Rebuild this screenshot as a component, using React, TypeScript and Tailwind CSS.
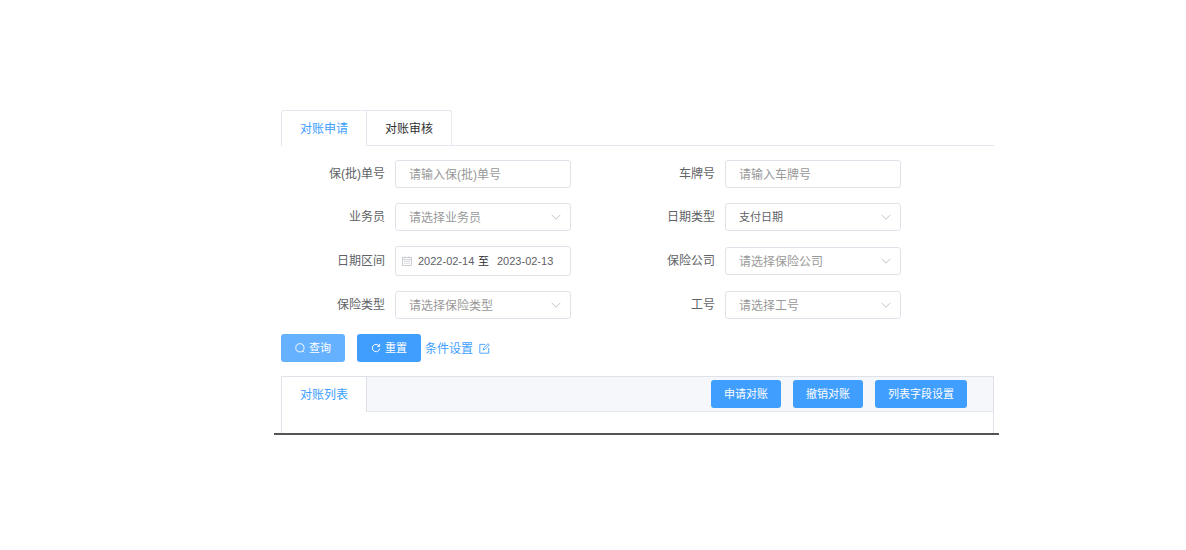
import { useState } from "react";
import type { ReactNode } from "react";

const FIELD = "h-7 w-[176px] rounded-[3px] border border-[#dfe2e8] bg-white px-[13px] outline-none focus:border-[#409eff]";

const ChevronIcon = () => (
  <svg className="pointer-events-none absolute right-[10px] top-[9px]" width="10" height="10" viewBox="0 0 10 10" fill="none">
    <path d="M0.7 2.9L5 7.2L9.3 2.9" stroke="#c0c4cc" strokeWidth="1"/>
  </svg>
);

const CalendarIcon = () => (
  <svg width="10" height="10" viewBox="0 0 10 10" fill="none" stroke="#c0c4cc" strokeWidth="0.8">
    <rect x="0.5" y="1.4" width="9" height="8.1"/>
    <path d="M0.5 3.7H9.5M2.9 0.3V2.3M7.1 0.3V2.3M2.2 5.4H3.6M4.3 5.4H5.7M6.4 5.4H7.8M2.2 7.4H3.6M4.3 7.4H5.7M6.4 7.4H7.8"/>
  </svg>
);

const SearchIcon = () => (
  <svg width="10" height="10" viewBox="0 0 10 10" fill="none" stroke="currentColor" strokeWidth="0.9">
    <circle cx="4.9" cy="4.8" r="4.1"/>
    <path d="M7.7 7.8L9.2 9.4"/>
  </svg>
);

const RefreshIcon = () => (
  <svg width="10" height="10" viewBox="0 0 10 10" fill="none" stroke="currentColor" strokeWidth="1">
    <path d="M8 2.8A3.7 3.7 0 1 0 8.7 5.6"/>
    <path d="M8.6 0.8V3.3H6.1"/>
  </svg>
);

const EditIcon = () => (
  <svg width="11" height="11" viewBox="0 0 11 11" fill="none" stroke="currentColor" strokeWidth="0.9">
    <path d="M6.2 1.4H0.8V10.2H9.7V5"/>
    <path d="M4.2 6.9L4.6 5L9 0.7L10.4 2L6 6.4L4.2 6.9Z"/>
  </svg>
);

function FormItem({ id, label, children }: { id: string; label: string; children: ReactNode }) {
  return (
    <div className="flex items-center gap-[10px]">
      <label htmlFor={id} className="w-[104px] text-right text-[#606266]">{label}</label>
      {children}
    </div>
  );
}

function TextField({ id, label, placeholder }: { id: string; label: string; placeholder: string }) {
  return (
    <FormItem id={id} label={label}>
      <input id={id} type="text" placeholder={placeholder}
        className={`${FIELD} pt-[2px] text-[#606266] placeholder:text-[#999999]`}/>
    </FormItem>
  );
}

function SelectField({ id, label, placeholder, value }: { id: string; label: string; placeholder?: string; value?: string }) {
  return (
    <FormItem id={id} label={label}>
      <div className="relative">
        <select id={id}
          className={`${FIELD} block appearance-none ${value ? "text-[11px] text-[#606266]" : "pt-[2px] text-[#999999]"}`}>
          <option>{value ?? placeholder}</option>
        </select>
        <ChevronIcon />
      </div>
    </FormItem>
  );
}

const TABS = ["对账申请", "对账审核"];
const ACTIONS = ["申请对账", "撤销对账", "列表字段设置"];

export default function App() {
  const [tab, setTab] = useState(0);
  const [start, setStart] = useState("2022-02-14");
  const [end, setEnd] = useState("2023-02-13");

  return (
    <main className="bg-white pb-[115px] pl-[274px] pr-[187px] pt-[110px] font-['Liberation_Sans','Noto_Sans_CJK_SC',sans-serif] text-[12px]">
      <div className="border-b-2 border-[#555555] pl-[7px] pr-[5px]">
        {/* Page tabs */}
        <div className="flex border-b border-[#e4e7ed]">
          <div role="tablist" className="-mb-px flex rounded-t-[3px] border border-b-0 border-[#e4e7ed]">
            {TABS.map((name, i) => (
              <button key={name} type="button" role="tab" aria-selected={tab === i} onClick={() => setTab(i)}
                className={`h-[35px] border-b border-[#e4e7ed] px-[18px] pt-px ${i > 0 ? "border-l" : ""} ${tab === i ? "border-b-white text-[#409eff]" : "text-[#303133]"}`}>
                {name}
              </button>
            ))}
          </div>
        </div>

        {/* Filters */}
        <form className="pt-[14px]" onSubmit={e => e.preventDefault()}>
          <div className="grid grid-cols-2 gap-y-[15px] pr-[53px]">
            <TextField id="policy" label="保(批)单号" placeholder="请输入保(批)单号"/>
            <TextField id="plate" label="车牌号" placeholder="请输入车牌号"/>
            <SelectField id="agent" label="业务员" placeholder="请选择业务员"/>
            <SelectField id="dateType" label="日期类型" value="支付日期"/>
            <FormItem id="start" label="日期区间">
              <div className="flex h-[30px] w-[176px] items-center rounded-[3px] border border-[#dfe2e8] pl-[6px] text-[11px] text-[#606266]">
                <CalendarIcon />
                <input id="start" type="text" value={start} onChange={e => setStart(e.target.value)}
                  className="ml-[6px] w-[60px] outline-none"/>
                <span className="text-[#303133]">至</span>
                <input aria-label="结束日期" type="text" value={end} onChange={e => setEnd(e.target.value)}
                  className="ml-2 w-[60px] outline-none"/>
              </div>
            </FormItem>
            <SelectField id="company" label="保险公司" placeholder="请选择保险公司"/>
            <SelectField id="insurance" label="保险类型" placeholder="请选择保险类型"/>
            <SelectField id="jobNo" label="工号" placeholder="请选择工号"/>
          </div>

          <div className="flex items-center pt-[15px]">
            <button type="submit" className="flex h-7 items-center gap-1 rounded-[3px] bg-[#66b1ff] px-[14px] text-[11px] text-white">
              <SearchIcon />查询
            </button>
            <button type="reset" className="ml-3 flex h-7 items-center gap-1 rounded-[3px] bg-[#409eff] px-[14px] text-[11px] text-white">
              <RefreshIcon />重置
            </button>
            <a href="#" className="ml-1 flex items-center gap-[6px] pt-px text-[#409eff]">
              条件设置<EditIcon />
            </a>
          </div>
        </form>

        {/* Result list */}
        <section className="mt-[14px] border border-b-0 border-[#dfe2e8]">
          <div className="flex h-[35px] items-center justify-between border-b border-[#e4e7ed] bg-[#f5f7fa] pr-[26px]">
            <button type="button" className="-mb-px h-[35px] border-r border-[#dfe2e8] bg-white px-[18px] pt-px text-[#409eff]">
              对账列表
            </button>
            <div className="flex gap-3">
              {ACTIONS.map(name => (
                <button key={name} type="button" className="h-7 rounded-[3px] bg-[#409eff] px-[13px] text-[11px] text-white">
                  {name}
                </button>
              ))}
            </div>
          </div>
          <div className="h-[21px]"/>
        </section>
      </div>
    </main>
  );
}
